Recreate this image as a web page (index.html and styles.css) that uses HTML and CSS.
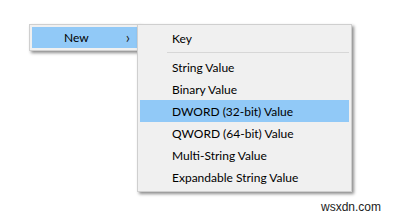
FILE: index.html
```html
<!DOCTYPE html>
<html>
<head>
<meta charset="utf-8">
<link rel="stylesheet" href="styles.css">
</head>
<body>
<div class="stage">
  <div class="menu main-menu">
    <div class="item active"><span class="label">New</span><span class="arrow">&#x203A;</span></div>
  </div>
  <div class="menu sub-menu">
    <div class="item">Key</div>
    <div class="sep"></div>
    <div class="item">String Value</div>
    <div class="item">Binary Value</div>
    <div class="item active">DWORD (32-bit) Value</div>
    <div class="item">QWORD (64-bit) Value</div>
    <div class="item">Multi-String Value</div>
    <div class="item">Expandable String Value</div>
  </div>
</div>
<div class="watermark">wsxdn.com</div>
</body>
</html>
```
FILE: styles.css
```css
html, body {
  margin: 0;
  padding: 0;
  background: #ffffff;
  width: 394px;
  height: 217px;
  overflow: hidden;
  position: relative;
  font-family: "Lato", "Noto Sans", sans-serif;
  font-size: 12px;
  color: #000;
}
.stage {
  display: flex;
  align-items: flex-start;
  padding: 24px 0 0 29px;
}
.menu {
  background: #f0f0f0;
  border: 1px solid #cfcfcf;
  box-shadow: 2px 2px 3px rgba(0, 0, 0, 0.45);
  box-sizing: border-box;
}
.main-menu {
  width: 111px;
  padding: 2px;
}
.main-menu .item {
  height: 21px;
  display: flex;
  align-items: center;
  padding-left: 32px;
  padding-right: 7px;
  justify-content: space-between;
}
.arrow {
  font-size: 15px;
  line-height: 1;
  color: #222;
}
.sub-menu {
  position: relative;
  z-index: 1;
  margin-left: -3px;
  width: 215px;
  padding: 2px 2px 3px 2px;
}
.sub-menu .item {
  height: 22px;
  display: flex;
  align-items: center;
  padding-left: 32px;
}
.item.active {
  background: #91c9f7;
}
.sep {
  height: 1px;
  background: #d7d7d7;
  margin: 3px 0 3px 27px;
}
.watermark {
  position: absolute;
  left: 321px;
  top: 200px;
  font-size: 12px;
  color: #222;
  font-family: "Liberation Sans", sans-serif;
}
```
